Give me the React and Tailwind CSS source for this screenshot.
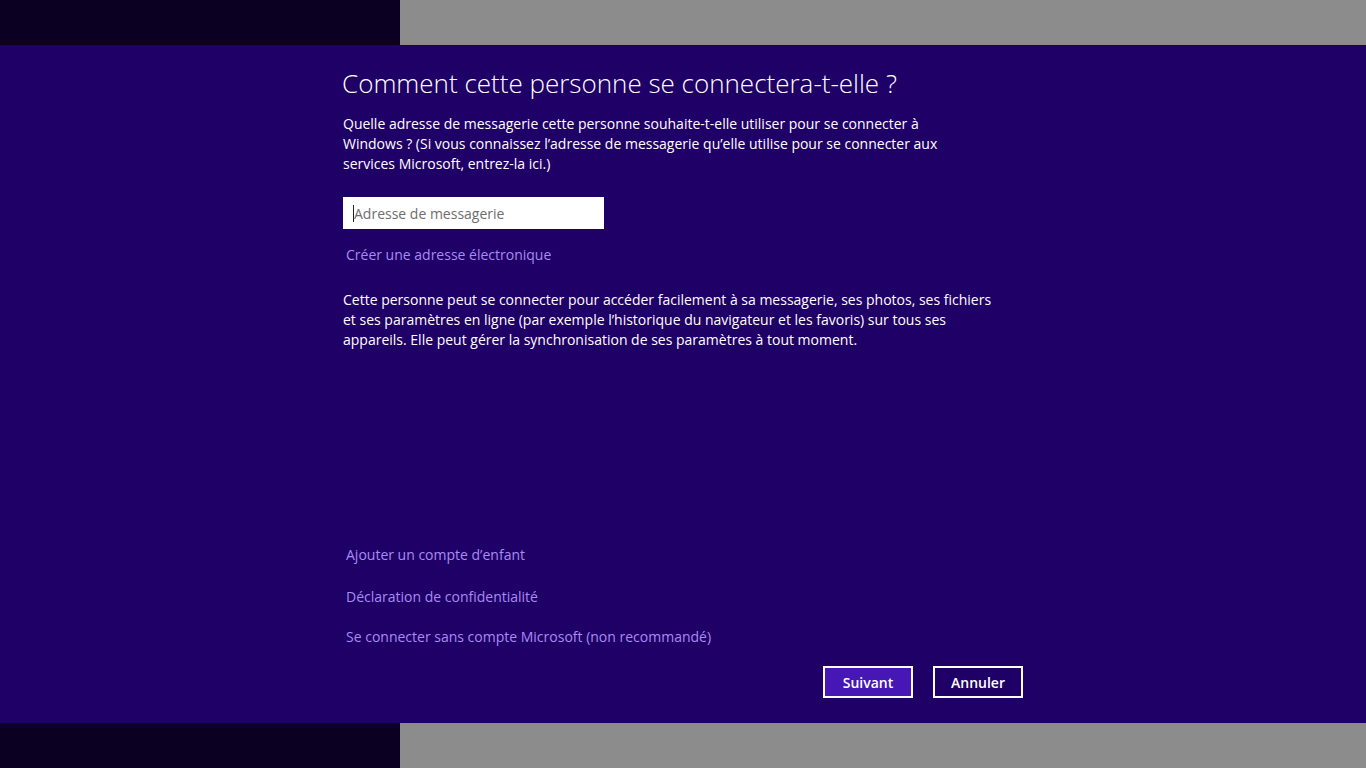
export default function App() {
  const font = { fontFamily: '"Open Sans", "Noto Sans", sans-serif' };
  return (
    <div className="w-[1366px] h-[768px] flex flex-col overflow-hidden" style={font}>
      <div className="h-[45px] flex">
        <div className="w-[400px] bg-[#0b0022]" />
        <div className="flex-1 bg-[#8c8c8c]" />
      </div>
      <div className="h-[678px] bg-[#1f0066] flex">
        <div className="w-[343px]" />
        <div className="w-[680px] flex flex-col">
          <h1 className="mt-[21px] text-[26px] leading-[34px] font-light text-white -ml-[1px]">
            Comment cette personne se connectera-t-elle ?
          </h1>
          <p className="mt-[14px] text-[14px] leading-[20px] text-white w-[620px]">
            Quelle adresse de messagerie cette personne souhaite-t-elle utiliser pour se connecter à Windows ? (Si vous connaissez l’adresse de messagerie qu’elle utilise pour se connecter aux services Microsoft, entrez-la ici.)
          </p>
          <div className="mt-[23px] w-[261px] h-[32px] bg-white flex items-center pl-[10px]">
            <span className="w-[1px] h-[17px] bg-[#222]" />
            <span className="text-[14px] text-[#6d6d6d]">Adresse de messagerie</span>
          </div>
          <a className="mt-[16px] ml-[3px] text-[14px] leading-[20px] text-[#a98bf4]">Créer une adresse électronique</a>
          <p className="mt-[25px] text-[14px] leading-[20px] text-white w-[662px]">
            Cette personne peut se connecter pour accéder facilement à sa messagerie, ses photos, ses fichiers et ses paramètres en ligne (par exemple l’historique du navigateur et les favoris) sur tous ses appareils. Elle peut gérer la synchronisation de ses paramètres à tout moment.
          </p>
          <div className="flex-1" />
          <div className="flex flex-col ml-[3px] text-[14px] leading-[20px] text-[#a98bf4]">
            <a>Ajouter un compte d’enfant</a>
            <a className="mt-[22px]">Déclaration de confidentialité</a>
            <a className="mt-[20px]">Se connecter sans compte Microsoft (non recommandé)</a>
          </div>
          <div className="mt-[19px] mb-[25px] flex justify-end gap-[20px]">
            <button className="w-[90px] h-[32px] border-2 border-white bg-[#4617b4] text-white text-[14px] font-semibold">Suivant</button>
            <button className="w-[90px] h-[32px] border-2 border-white bg-[#1f0066] text-white text-[14px] font-semibold">Annuler</button>
          </div>
        </div>
      </div>
      <div className="h-[45px] flex">
        <div className="w-[400px] bg-[#0b0022]" />
        <div className="flex-1 bg-[#8c8c8c]" />
      </div>
    </div>
  );
}
